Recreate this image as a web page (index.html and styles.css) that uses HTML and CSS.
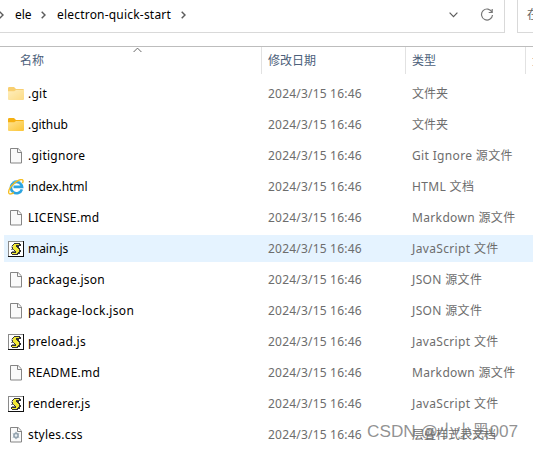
FILE: index.html
```html
<!DOCTYPE html>
<html lang="zh-CN">
<head>
<meta charset="utf-8">
<title>electron-quick-start</title>
<link rel="stylesheet" href="styles.css">
</head>
<body>
<svg class="defs" width="0" height="0">
  <defs>
    <linearGradient id="gold" x1="0" y1="0" x2="1" y2="1"><stop offset="0" stop-color="#ffe391"/><stop offset="1" stop-color="#fbc536"/></linearGradient>
    <symbol id="folder" viewBox="0 0 16 16">
      <path d="M0 2.2Q0 1 1.2 1H6l2 2h6.8Q16 3 16 4v3H0z" fill="#f5b012"/>
      <path d="M0 5.2h6.2L8 4h8v9q0 1-1 1H1q-1 0-1-1z" fill="url(#gold)"/>
    </symbol>
    <symbol id="page" viewBox="0 0 16 16">
      <path d="M2.5.5h7.6l3.4 3.4v11.1h-11z" fill="#fafafa" stroke="#858585"/>
      <path d="M9.5.5v4h4" fill="none" stroke="#858585"/>
    </symbol>
    <symbol id="css" viewBox="0 0 16 16">
      <use href="#page"/>
      <circle cx="8" cy="8.5" r="2" fill="none" stroke="#94a3af" stroke-width="1.8"/>
      <path d="M8 4.8v7.4M4.8 6.6l6.4 3.8M4.8 10.4l6.4-3.8" stroke="#94a3af"/>
      <circle cx="8" cy="8.5" r="1.2" fill="#e9edf0"/>
    </symbol>
    <symbol id="ie" viewBox="0 0 16 16">
      <path d="M13.9 10.3A5.6 5.6 0 1 1 14.1 7.9H5.5" fill="none" stroke="#2da4df" stroke-width="2.6"/>
      <path d="M13.5 4.2A6.1 6.1 0 0 0 4 3.5" fill="none" stroke="#5cc5ef" stroke-width="1"/>
      <path d="M14.4 4.3C16.3.3 14-.1 10.3 1.3 4.8 4-.2 10.6.8 14c.6 1.7 3 .9 5-.4" fill="none" stroke="#f5bd22" stroke-width="1.4"/>
    </symbol>
    <symbol id="js" viewBox="0 0 16 16">
      <path d="M0 0h16v16H0z" fill="#111"/>
      <path d="M0 0h15v15H0z" fill="#8a8a8a"/>
      <path d="M1 1h14v14H1z" fill="#fff"/>
      <path d="M6 2h6v1h1v2h-2v2h1v2h1v2h-1v2h-2v1H4v-1H3v-2h4v-1H6V9H5V8H4V6h1V5H4V4h1V3h1z" fill="#333"/>
      <path d="M6 3h5v1H8v2h1v1h1v1h1v3h-1v1H9v1H4v-1h4v-2H7V9H6V8H5V4h1z" fill="#f2e936"/>
      <path d="M3 6h2M3 8.5h3M4 10.5h3" stroke="#666" stroke-width=".8"/>
    </symbol>
  </defs>
</svg>
<div class="window">
  <div class="toolbar">
    <div class="address">
      <svg class="sep first" viewBox="0 0 5 8"><path d="M.7.7 4 4 .7 7.3"/></svg>
      <span class="crumb ele">ele</span>
      <svg class="sep" viewBox="0 0 5 8"><path d="M.7.7 4 4 .7 7.3"/></svg>
      <span class="crumb project">electron-quick-start</span>
      <svg class="sep" viewBox="0 0 5 8"><path d="M.7.7 4 4 .7 7.3"/></svg>
      <svg class="down" viewBox="0 0 9 6"><path d="M.6.7 4.5 4.6 8.4.7"/></svg>
      <svg class="refresh" viewBox="0 0 14 14"><path d="M12 4.2A5.5 5.5 0 1 0 12.5 7M12.2 1v3.5H8.7"/></svg>
    </div>
    <div class="search">在</div>
  </div>
  <div class="header">
    <svg class="sort" viewBox="0 0 9 6"><path d="M.6 5 4.5 1.1 8.4 5"/></svg>
    <div class="name">名称</div><div>修改日期</div><div>类型</div><div class="size">大小</div>
  </div>
  <div class="files">
    <div class="row"><svg class="icon faded"><use href="#folder"/></svg><span class="file">.git</span><span class="date">2024/3/15 16:46</span><span class="type plain">文件夹</span></div>
    <div class="row"><svg class="icon"><use href="#folder"/></svg><span class="file narrow">.github</span><span class="date">2024/3/15 16:46</span><span class="type plain">文件夹</span></div>
    <div class="row"><svg class="icon"><use href="#page"/></svg><span class="file">.gitignore</span><span class="date">2024/3/15 16:46</span><span class="type">Git Ignore 源文件</span></div>
    <div class="row"><svg class="icon"><use href="#ie"/></svg><span class="file narrow">index.html</span><span class="date">2024/3/15 16:46</span><span class="type">HTML 文档</span></div>
    <div class="row"><svg class="icon"><use href="#page"/></svg><span class="file">LICENSE.md</span><span class="date">2024/3/15 16:46</span><span class="type">Markdown 源文件</span></div>
    <div class="row selected"><svg class="icon"><use href="#js"/></svg><span class="file narrow">main.js</span><span class="date">2024/3/15 16:46</span><span class="type">JavaScript 文件</span></div>
    <div class="row"><svg class="icon"><use href="#page"/></svg><span class="file">package.json</span><span class="date">2024/3/15 16:46</span><span class="type">JSON 源文件</span></div>
    <div class="row"><svg class="icon"><use href="#page"/></svg><span class="file wide">package-lock.json</span><span class="date">2024/3/15 16:46</span><span class="type">JSON 源文件</span></div>
    <div class="row"><svg class="icon"><use href="#js"/></svg><span class="file">preload.js</span><span class="date">2024/3/15 16:46</span><span class="type">JavaScript 文件</span></div>
    <div class="row"><svg class="icon"><use href="#page"/></svg><span class="file">README.md</span><span class="date">2024/3/15 16:46</span><span class="type">Markdown 源文件</span></div>
    <div class="row"><svg class="icon"><use href="#js"/></svg><span class="file">renderer.js</span><span class="date">2024/3/15 16:46</span><span class="type">JavaScript 文件</span></div>
    <div class="row"><svg class="icon"><use href="#css"/></svg><span class="file">styles.css</span><span class="date">2024/3/15 16:46</span><span class="type plain">层叠样式表文档</span></div>
  </div>
  <div class="watermark">CSDN @小小黑007</div>
</div>
</body>
</html>
```
FILE: styles.css
```css
* { box-sizing: border-box; }
body { margin: 0; background: #fff; }
.defs { position: absolute; }
.window {
  position: relative;
  width: 533px;
  height: 449px;
  overflow: hidden;
  font: 12px/16px "Noto Sans", "Noto Sans CJK SC", sans-serif;
  color: #000;
}
.toolbar { display: flex; height: 33px; gap: 12px; }
.address {
  display: flex;
  flex: none;
  align-items: center;
  width: 505px;
  padding-bottom: 2px;
  border: solid #d9d9d9;
  border-width: 0 1px 1px 0;
}
.search {
  width: 40px;
  flex: none;
  padding: 7px 0 0 9px;
  border: solid #d9d9d9;
  border-width: 0 0 1px 1px;
  color: #666;
}
.address svg { flex: none; fill: none; stroke: #5c5c5c; stroke-width: 1.2; }
.sep { width: 5px; height: 8px; }
.address .sep { stroke-width: 1.5; }
.address .first { margin-left: -1px; }
.crumb { white-space: nowrap; flex: none; }
.ele { width: 26px; margin-left: 11px; }
.project { width: 124px; margin-left: 11px; letter-spacing: 0.2px; }
.down { width: 9px; height: 6px; margin-left: 263px; }
.address .refresh { width: 14px; height: 14px; margin-left: 22px; stroke: #777; }
.header {
  position: relative;
  display: grid;
  grid-template-columns: 262px 144px 120px 40px;
  height: 28px;
  margin-top: 13px;
  border-top: 1px solid #bdbdbd;
  color: #4c607a;
}
.header div { height: 27px; padding: 6px 0 0 6px; border-right: 1px solid #e2e2e2; }
.header .name { padding-left: 20px; }
.sort { position: absolute; left: 133px; top: 0; width: 9px; height: 6px; fill: none; stroke: #666; }
.files { display: grid; grid-auto-rows: 27px; row-gap: 4px; padding: 6px 0 0 4px; }
.row {
  display: grid;
  grid-template-columns: 20px 240px 144px 1fr;
  align-items: center;
  padding-left: 4px;
  white-space: nowrap;
}
.selected { background: #e5f3ff; }
.icon { width: 16px; height: 16px; }
.faded { opacity: 0.6; }
.file { letter-spacing: 0.25px; }
.narrow { letter-spacing: -0.05px; }
.wide { letter-spacing: 0.35px; }
.date, .type { color: #6d6d6d; }
.date { letter-spacing: 0.2px; }
.type { letter-spacing: 0.35px; }
.plain { letter-spacing: 0; }
.watermark {
  position: absolute;
  left: 367px;
  top: 420px;
  font: 17.2px/22px "Liberation Sans", "Noto Sans CJK SC", sans-serif;
  color: rgba(110, 110, 110, 0.75);
  white-space: nowrap;
}
```
